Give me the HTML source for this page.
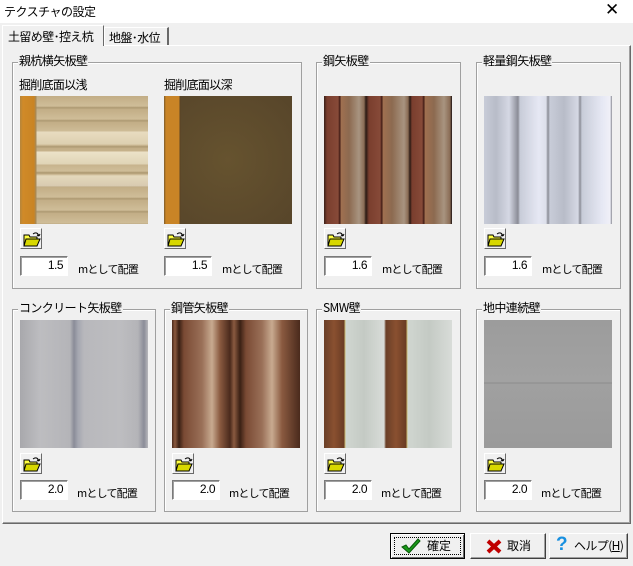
<!DOCTYPE html><html><head><meta charset="utf-8"><style>
*{box-sizing:border-box;margin:0;padding:0}
body{width:633px;height:566px;background:#f0f0f0;font-family:"Noto Sans CJK JP",sans-serif;font-size:12px;color:#000;position:relative;overflow:hidden}
.a{position:absolute}
.title{left:0;top:0;width:633px;height:23px;background:#fff;}
.title .t{position:absolute;left:4px;top:3px;font-size:12px;letter-spacing:-0.5px}
.title .x{position:absolute;left:605px;top:0;font-size:17px;font-family:"DejaVu Sans",sans-serif}
.gb{position:absolute;border:1px solid #a0a0a0;box-shadow:1px 1px 0 #fff inset}
.gl{position:absolute;background:#f0f0f0;padding:0 1px;font-size:12px;line-height:14px;letter-spacing:-0.6px}
.img{position:absolute;width:128px;height:128px}
.fb{position:absolute;width:22px;height:21px;background:#f0f0f0;border:1px solid;border-color:#fff #696969 #696969 #fff}
.fb svg{position:absolute;left:2px;top:2px}
.in{position:absolute;width:48px;height:20px;background:#fff;border:1px solid;border-color:#7a7a7a #fff #fff #7a7a7a;box-shadow:inset 1px 1px 0 #a0a0a0;text-align:right;padding:1px 4px 0 0;font-family:"Liberation Sans",sans-serif;font-size:12px;letter-spacing:-0.5px}
.lb{position:absolute;font-size:11px;letter-spacing:-0.8px;line-height:14px}
.btn{position:absolute;height:26px;border:1px solid;border-color:#fff #404040 #404040 #fff;box-shadow:inset -1px -1px 0 #a0a0a0;background:#f0f0f0;font-size:12px;line-height:24px}
</style></head><body>
<div class="a title"><span class="t">テクスチャの設定</span><span class="x">✕</span></div>
<div class="a" style="left:2px;top:25px;width:102px;height:21px;background:#f0f0f0;border:1px solid #fff;border-right-color:#696969;border-bottom:none;z-index:2"><span style="position:absolute;left:5px;top:2px;font-size:12px;letter-spacing:-0.6px">土留め壁･控え杭</span></div>
<div class="a" style="left:104px;top:27px;width:65px;height:18px;border:1px solid #fff;border-right:2px solid #696969;border-bottom:none"><span style="position:absolute;left:4px;top:1px;letter-spacing:-0.6px">地盤･水位</span></div>
<div class="a" style="left:2px;top:45px;width:629px;height:479px;border:1px solid;border-color:#fff #696969 #696969 #fff;box-shadow:inset -1px -1px 0 #a0a0a0"></div>

<div class="gb" style="left:12px;top:62px;width:290px;height:227px"></div><div class="gl" style="left:18px;top:54px">親杭横矢板壁</div>
<div class="lb" style="left:19px;top:78px;font-size:12px;letter-spacing:-0.7px">掘削底面以浅</div><div class="lb" style="left:164px;top:78px;font-size:12px;letter-spacing:-0.7px">掘削底面以深</div>
<div class="img" style="left:20px;top:96px;background:
linear-gradient(90deg,#b5853b 0,#d08a28 3px,#c98424 14px,#a58a5a 16px,transparent 17px),
linear-gradient(180deg,transparent 0,transparent 35px,#e8dcc0 36px,#ddd0b0 48px,transparent 49px,transparent 55px,#ece2c8 56px,#e0d4b6 68px,transparent 69px,transparent 78px,#e4d8bc 80px,#d8cab0 90px,transparent 91px),
repeating-linear-gradient(180deg,#c2ad86 0,#cfbd98 10px,#a8946c 12px,#c6b28c 13px),
#c8b48a"></div>
<div class="img" style="left:164px;top:96px;background:linear-gradient(90deg,#7a5a2a 0,#c98426 2px,#c98426 15px,#5a4324 16px,transparent 17px),radial-gradient(circle at 50% 50%,#66532f,#57452a)"></div>
<div class="gb" style="left:316px;top:62px;width:145px;height:227px"></div><div class="gl" style="left:322px;top:54px">鋼矢板壁</div>
<div class="img" style="left:324px;top:96px;background:linear-gradient(90deg,#3a2018 0,#7a3e2e 3px,#874a38 14px,#3e1a14 16px,#a07050 17px,#8c6a50 25px,#a89480 35px,#8a6c55 40px,#2a1a14 42px,#7a3e2e 45px,#874a38 56px,#3e1a14 58px,#a07050 59px,#8c6a50 68px,#a89480 80px,#8a6c55 84px,#2a1a14 86px,#7a3e2e 88px,#874a38 98px,#3e1a14 100px,#a07050 101px,#8c6a50 110px,#a89480 120px,#8a6c55 126px,#1a1010 128px)"></div>
<div class="gb" style="left:476px;top:62px;width:145px;height:227px"></div><div class="gl" style="left:482px;top:54px">軽量鋼矢板壁</div>
<div class="img" style="left:484px;top:96px;background:linear-gradient(90deg,#c8ccd8 0,#b8bcc8 12px,#d5d8e4 25px,#8a8c96 34px,#c8ccd8 36px,#e6e8f4 55px,#dcdfea 62px,#8a8c96 64px,#c8ccd8 66px,#b8bcc8 80px,#d5d8e4 94px,#8a8c96 96px,#c8ccd8 98px,#e6e8f4 118px,#f0f0f8 126px,#8a8c96 128px)"></div>

<div class="fb" style="left:20px;top:228px"><svg width="18" height="16"><path d="M1 4h5l1 2h7v9H1z" fill="#ffff40" stroke="#000"/><path d="M3 8h14l-3 7H1z" fill="#d8d800" stroke="#000"/><path d="M10 3q4-3 6 2m0 0l-2-1m2 1l1-2" fill="none" stroke="#000"/></svg></div>
<div class="fb" style="left:164px;top:228px"><svg width="18" height="16"><path d="M1 4h5l1 2h7v9H1z" fill="#ffff40" stroke="#000"/><path d="M3 8h14l-3 7H1z" fill="#d8d800" stroke="#000"/><path d="M10 3q4-3 6 2m0 0l-2-1m2 1l1-2" fill="none" stroke="#000"/></svg></div>
<div class="fb" style="left:324px;top:228px"><svg width="18" height="16"><path d="M1 4h5l1 2h7v9H1z" fill="#ffff40" stroke="#000"/><path d="M3 8h14l-3 7H1z" fill="#d8d800" stroke="#000"/><path d="M10 3q4-3 6 2m0 0l-2-1m2 1l1-2" fill="none" stroke="#000"/></svg></div>
<div class="fb" style="left:484px;top:228px"><svg width="18" height="16"><path d="M1 4h5l1 2h7v9H1z" fill="#ffff40" stroke="#000"/><path d="M3 8h14l-3 7H1z" fill="#d8d800" stroke="#000"/><path d="M10 3q4-3 6 2m0 0l-2-1m2 1l1-2" fill="none" stroke="#000"/></svg></div>
<div class="in" style="left:20px;top:256px">1.5</div><div class="lb" style="left:78px;top:262px">mとして配置</div>
<div class="in" style="left:164px;top:256px">1.5</div><div class="lb" style="left:222px;top:262px">mとして配置</div>
<div class="in" style="left:324px;top:256px">1.6</div><div class="lb" style="left:382px;top:262px">mとして配置</div>
<div class="in" style="left:484px;top:256px">1.6</div><div class="lb" style="left:542px;top:262px">mとして配置</div>

<div class="gb" style="left:12px;top:309px;width:144px;height:203px"></div><div class="gl" style="left:18px;top:301px">コンクリート矢板壁</div>
<div class="gb" style="left:164px;top:309px;width:144px;height:203px"></div><div class="gl" style="left:170px;top:301px">鋼管矢板壁</div>
<div class="gb" style="left:316px;top:309px;width:145px;height:203px"></div><div class="gl" style="left:322px;top:301px">SMW壁</div>
<div class="gb" style="left:476px;top:309px;width:145px;height:203px"></div><div class="gl" style="left:482px;top:301px">地中連続壁</div>
<div class="img" style="left:20px;top:320px;background:linear-gradient(90deg,#a8a8ac 0,#bdbdc0 20px,#b4b4b8 50px,#8a8c98 54px,#a4a6b0 58px,#b8b8bc 64px,#bdbdc0 100px,#b4b4b8 118px,#8a8c98 124px,#b8b8bc 128px)"></div>
<div class="img" style="left:172px;top:320px;background:linear-gradient(90deg,#4a2a1c 0,#8a5a40 3px,#3a2014 7px,#7a4a34 12px,#9a7058 30px,#c8aa90 40px,#8a5a40 48px,#4a2a1c 58px,#8a5a40 62px,#3a2014 68px,#7a4a34 74px,#9a7058 90px,#c8aa90 100px,#8a5a40 110px,#4a2a1c 128px)"></div>
<div class="img" style="left:324px;top:320px;background:linear-gradient(90deg,#6a4028 0,#8a5030 10px,#6a3c24 20px,#c8b870 21px,#d0d6d0 22px,#c4cac4 40px,#d8dcd8 60px,#6a4028 62px,#8a5030 72px,#6a3c24 82px,#c8b870 83px,#d0d6d0 84px,#c4cac4 105px,#d8dcd8 128px)"></div>
<div class="img" style="left:484px;top:320px;background:linear-gradient(180deg,#9c9c9c 0,#a2a2a2 62px,#8c8c8c 63px,#a0a0a0 64px,#9a9a9a 128px)"></div>
<div class="fb" style="left:20px;top:453px"><svg width="18" height="16"><path d="M1 4h5l1 2h7v9H1z" fill="#ffff40" stroke="#000"/><path d="M3 8h14l-3 7H1z" fill="#d8d800" stroke="#000"/><path d="M10 3q4-3 6 2m0 0l-2-1m2 1l1-2" fill="none" stroke="#000"/></svg></div>
<div class="fb" style="left:172px;top:453px"><svg width="18" height="16"><path d="M1 4h5l1 2h7v9H1z" fill="#ffff40" stroke="#000"/><path d="M3 8h14l-3 7H1z" fill="#d8d800" stroke="#000"/><path d="M10 3q4-3 6 2m0 0l-2-1m2 1l1-2" fill="none" stroke="#000"/></svg></div>
<div class="fb" style="left:324px;top:453px"><svg width="18" height="16"><path d="M1 4h5l1 2h7v9H1z" fill="#ffff40" stroke="#000"/><path d="M3 8h14l-3 7H1z" fill="#d8d800" stroke="#000"/><path d="M10 3q4-3 6 2m0 0l-2-1m2 1l1-2" fill="none" stroke="#000"/></svg></div>
<div class="fb" style="left:484px;top:453px"><svg width="18" height="16"><path d="M1 4h5l1 2h7v9H1z" fill="#ffff40" stroke="#000"/><path d="M3 8h14l-3 7H1z" fill="#d8d800" stroke="#000"/><path d="M10 3q4-3 6 2m0 0l-2-1m2 1l1-2" fill="none" stroke="#000"/></svg></div>
<div class="in" style="left:20px;top:480px">2.0</div><div class="lb" style="left:77px;top:486px">mとして配置</div>
<div class="in" style="left:172px;top:480px">2.0</div><div class="lb" style="left:229px;top:486px">mとして配置</div>
<div class="in" style="left:324px;top:480px">2.0</div><div class="lb" style="left:381px;top:486px">mとして配置</div>
<div class="in" style="left:484px;top:480px">2.0</div><div class="lb" style="left:541px;top:486px">mとして配置</div>

<div class="btn" style="left:390px;top:533px;width:75px;border-color:#000;box-shadow:inset 1px 1px 0 #fff,inset -1px -1px 0 #696969">
<div style="position:absolute;left:3px;top:3px;right:3px;bottom:3px;border:1px dotted #000"></div>
<svg class="a" style="left:10px;top:4px" width="20" height="16"><path d="M1 9l4-2 3 4 9-10 2 2-11 12z" fill="#1a9a1a" stroke="#0a5a0a"/></svg><span class="a" style="left:36px;top:0">確定</span></div>
<div class="btn" style="left:470px;top:533px;width:76px"><svg class="a" style="left:15px;top:5px" width="16" height="15"><path d="M2 2l12 11M14 2L2 13" stroke="#c00000" stroke-width="4"/></svg><span class="a" style="left:36px;top:0">取消</span></div>
<div class="btn" style="left:549px;top:533px;width:79px"><span class="a" style="left:6px;top:0;line-height:24px;font:bold 19px 'Liberation Sans',sans-serif;color:#1890e0">?</span><span class="a" style="left:24px;top:0;letter-spacing:-0.6px">ヘルプ(<u>H</u>)</span></div>
</body></html>
